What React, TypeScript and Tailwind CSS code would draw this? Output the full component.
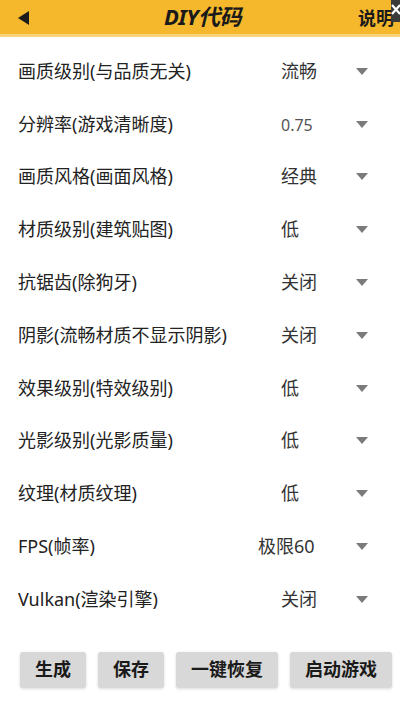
const rows = [
  { label: "画质级别(与品质无关)", value: "流畅", cls: "text-[#333]" },
  { label: "分辨率(游戏清晰度)", value: "0.75", cls: "text-[#555] text-[16px]" },
  { label: "画质风格(画面风格)", value: "经典", cls: "text-[#333]" },
  { label: "材质级别(建筑贴图)", value: "低", cls: "text-[#333]" },
  { label: "抗锯齿(除狗牙)", value: "关闭", cls: "text-[#333]" },
  { label: "阴影(流畅材质不显示阴影)", value: "关闭", cls: "text-[#333]" },
  { label: "效果级别(特效级别)", value: "低", cls: "text-[#333]" },
  { label: "光影级别(光影质量)", value: "低", cls: "text-[#333]" },
  { label: "纹理(材质纹理)", value: "低", cls: "text-[#333]" },
  { label: "FPS(帧率)", value: "极限60", cls: "text-[#333] -ml-[23px]" },
  { label: "Vulkan(渲染引擎)", value: "关闭", cls: "text-[#333]" },
];

const buttons = ["生成", "保存", "一键恢复", "启动游戏"];

const Caret = () => (
  <svg width="12" height="7" viewBox="0 0 12 7">
    <path d="M0 0h12L6 7z" fill="#7a7a7a" />
  </svg>
);

export default function App() {
  return (
    <div
      className="relative w-[400px] h-[710px] bg-white overflow-hidden"
      style={{ fontFamily: '"Noto Sans", "Noto Sans CJK SC", sans-serif' }}
    >
      {/* Header */}
      <div className="h-[37px] bg-[#f5b82d] border-b-[3px] border-[#f9d27c] relative">
        <svg className="absolute left-[18px] top-[11px]" width="11" height="14" viewBox="0 0 11 14">
          <path d="M11 0v14L0 7z" fill="#1c1c1c" />
        </svg>
        <div className="absolute left-[164px] top-[0px] text-[22px] font-bold italic text-[#1a1a1a] tracking-tight">
          DIY代码
        </div>
        <div className="absolute left-[358px] top-[7px] text-[18px] font-bold text-[#1a1a1a] whitespace-nowrap leading-none pt-[2px]">
          说明
        </div>
        {/* corner close overlay */}
        <svg className="absolute right-0 top-0" width="9" height="22" viewBox="0 0 9 22">
          <rect width="9" height="22" fill="#3a3a3a" />
          <path d="M1 5l8 9M9 5l-8 9" stroke="#fff" strokeWidth="2.2" />
        </svg>
      </div>

      {/* Settings list */}
      <div className="mt-[8px] flex flex-col">
        {rows.map((r) => (
          <div key={r.label} className="h-[52.8px] flex items-center">
            <div className="w-[281px] pl-[18px] text-[18px] text-[#222] whitespace-nowrap">
              {r.label}
            </div>
            <div className="w-[75px] text-[18px] whitespace-nowrap">
              <span className={r.cls}>{r.value}</span>
            </div>
            <Caret />
          </div>
        ))}
      </div>

      {/* Buttons */}
      <div className="mt-[26px] flex gap-[12px] pl-[20px]">
        {buttons.map((b) => (
          <button
            key={b}
            className="h-[36px] px-[15px] bg-[#d8d8d8] rounded-[3px] shadow-[0_1px_3px_rgba(0,0,0,0.15)] text-[18px] font-bold text-[#1a1a1a] whitespace-nowrap"
          >
            {b}
          </button>
        ))}
      </div>
    </div>
  );
}
